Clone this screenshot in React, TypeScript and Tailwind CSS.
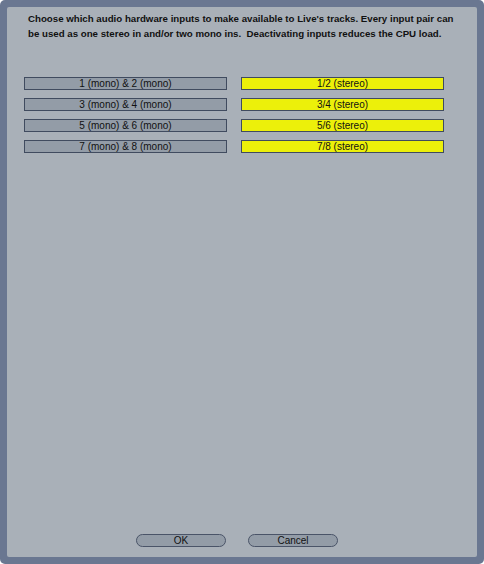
import React from "react";

const monoRows = [
  ["1 (mono) & 2 (mono)", "1/2 (stereo)"],
  ["3 (mono) & 4 (mono)", "3/4 (stereo)"],
  ["5 (mono) & 6 (mono)", "5/6 (stereo)"],
  ["7 (mono) & 8 (mono)", "7/8 (stereo)"],
];

export default function App() {
  return (
    <div className="w-[484px] h-[564px] bg-white" style={{ fontFamily: '"Liberation Sans", Arial, sans-serif' }}>
      <div className="w-full h-full bg-[#6a7791] rounded-[5px] p-[7px]">
        <div className="w-full h-full bg-[#a9b0b8] rounded-[2px] flex flex-col">
          <div className="pl-[21px] pt-[3.5px] text-[9.7px] font-bold leading-[15px] text-[#111] whitespace-pre">
            {"Choose which audio hardware inputs to make available to Live's tracks. Every input pair can\nbe used as one stereo in and/or two mono ins.  Deactivating inputs reduces the CPU load."}
          </div>
          <div className="mt-[36.5px] pl-[17px] flex flex-col gap-[8px]">
            {monoRows.map(([mono, stereo]) => (
              <div key={mono} className="flex gap-[14px]">
                <div className="w-[203px] h-[13px] border border-[#404b5f] bg-[#939ca7] flex items-center justify-center text-[10px] leading-none text-[#111]">
                  {mono}
                </div>
                <div className="w-[203px] h-[13px] border border-[#404b5f] bg-[#ecf00a] flex items-center justify-center text-[10px] leading-none text-[#111]">
                  {stereo}
                </div>
              </div>
            ))}
          </div>
          <div className="mt-auto mb-[10px] pl-[129px] flex gap-[22px]">
            <div className="w-[90px] h-[13px] rounded-full border border-[#4a5468] bg-[#939ca7] flex items-center justify-center text-[10px] leading-none text-[#111]">
              OK
            </div>
            <div className="w-[90px] h-[13px] rounded-full border border-[#4a5468] bg-[#939ca7] flex items-center justify-center text-[10px] leading-none text-[#111]">
              Cancel
            </div>
          </div>
        </div>
      </div>
    </div>
  );
}
